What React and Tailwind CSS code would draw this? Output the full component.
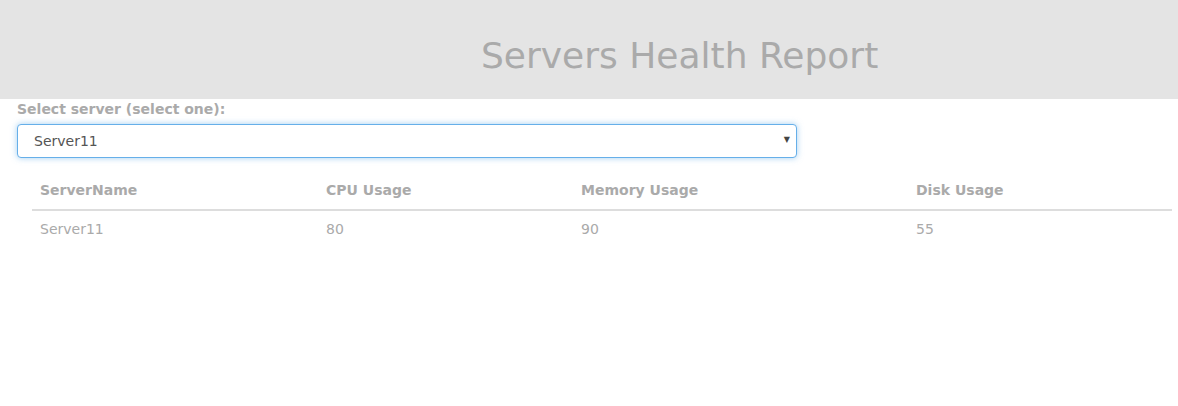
import React, { useState } from 'react';

const servers = [
  { name: 'Server11', cpu: 80, memory: 90, disk: 55 },
  { name: 'Server12', cpu: 45, memory: 60, disk: 70 },
];

function App() {
  const [selected, setSelected] = useState('Server11');
  const rows = servers.filter(s => s.name === selected);

  return (
    <div className="min-h-[406px] bg-white text-[#aaa]" style={{ fontFamily: '"DejaVu Sans", Verdana, sans-serif' }}>
      {/* cabecera */}
      <div className="h-[99px] bg-[#e4e4e4] flex items-center pl-[481px]">
        <h1 className="text-[36px] font-normal text-[#aaa] leading-none mt-[12px]">
          Servers Health Report
        </h1>
      </div>

      <div className="px-[17px]">
        <label className="block text-[14px] font-bold mt-[1px] mb-[6px] leading-[18px]">Select server (select one):</label>
        <div className="relative w-[780px]">
          <select
            value={selected}
            onChange={e => setSelected(e.target.value)}
            className="w-full h-[34px] appearance-none rounded-[4px] border border-[#66afe9] bg-white pl-[16px] text-[14px] text-[#555] outline-none shadow-[0_0_6px_rgba(102,175,233,0.6)]"
          >
            {servers.map(s => <option key={s.name}>{s.name}</option>)}
          </select>
          <span className="pointer-events-none absolute right-[7px] top-[12px] text-[8px] leading-none text-[#444]">▼</span>
        </div>
      </div>

      <div className="pl-[32px] pr-[6px] mt-[15px]">
        <table className="w-full text-[14px] border-collapse">
          <thead>
            <tr className="border-b-2 border-[#ddd]">
              <th className="text-left font-bold pl-[8px] pt-[8px] pb-[10px] leading-[18px] w-[286px]">ServerName</th>
              <th className="text-left font-bold pl-[8px] pt-[8px] pb-[10px] leading-[18px] w-[255px]">CPU Usage</th>
              <th className="text-left font-bold pl-[8px] pt-[8px] pb-[10px] leading-[18px] w-[335px]">Memory Usage</th>
              <th className="text-left font-bold pl-[8px] pt-[8px] pb-[10px] leading-[18px]">Disk Usage</th>
            </tr>
          </thead>
          <tbody>
            {rows.map(r => (
              <tr key={r.name}>
                <td className="pl-[8px] pt-[9px] pb-[8px] leading-[18px]">{r.name}</td>
                <td className="pl-[8px] pt-[9px] pb-[8px] leading-[18px]">{r.cpu}</td>
                <td className="pl-[8px] pt-[9px] pb-[8px] leading-[18px]">{r.memory}</td>
                <td className="pl-[8px] pt-[9px] pb-[8px] leading-[18px]">{r.disk}</td>
              </tr>
            ))}
          </tbody>
        </table>
      </div>
    </div>
  );
}

export default App;
